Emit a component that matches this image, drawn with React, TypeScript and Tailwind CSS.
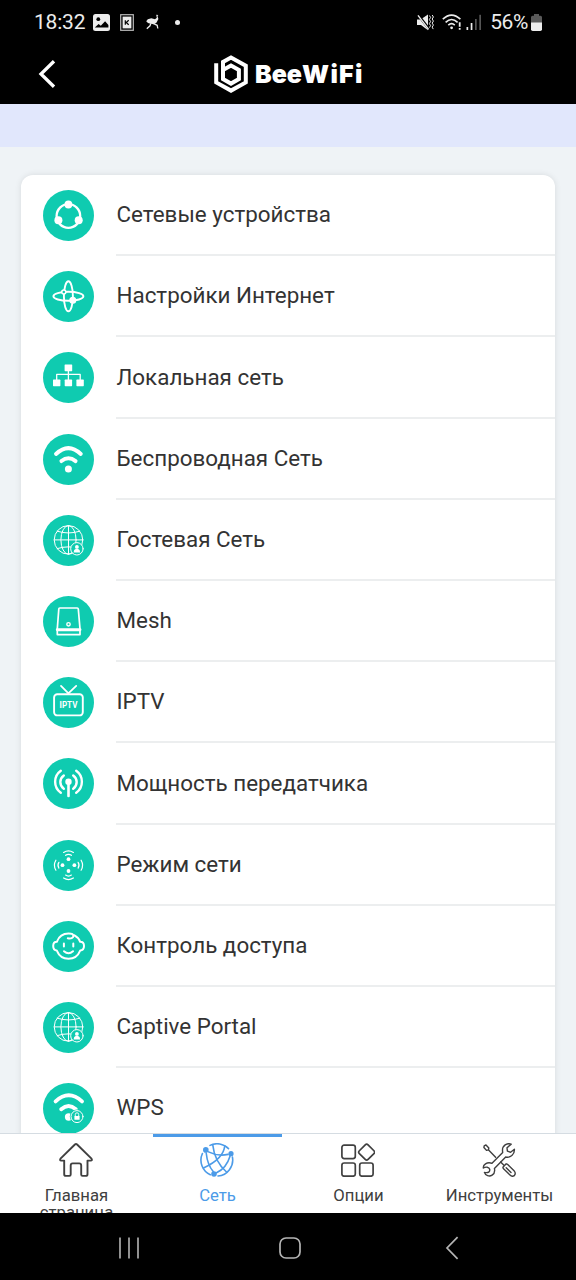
import type { ReactNode } from 'react';

const TEAL = '#0fcbb0';

/* ---------- menu icons, all on a 51x51 grid ---------- */

function Disc({ children }: { children: ReactNode }) {
  return (
    <svg
      viewBox="0 0 51 51"
      className="h-[51px] w-[51px] shrink-0"
      fill="none"
      stroke="white"
      strokeLinecap="round"
      strokeLinejoin="round"
      aria-hidden
    >
      <circle cx="25.5" cy="25.5" r="25.5" fill={TEAL} stroke="none" />
      {children}
    </svg>
  );
}

function DevicesIcon() {
  return (
    <Disc>
      <circle cx="25.4" cy="26" r="11.8" strokeWidth="2.3" />
      <g fill="white" stroke="none">
        <circle cx="25.4" cy="14.5" r="3.9" />
        <circle cx="15.4" cy="30.2" r="4" />
        <circle cx="35.7" cy="30.2" r="4" />
      </g>
    </Disc>
  );
}

function InternetIcon() {
  return (
    <Disc>
      <ellipse cx="25.4" cy="25.3" rx="15" ry="4.5" strokeWidth="1.9" />
      <ellipse cx="25.4" cy="25.3" rx="4.5" ry="15" strokeWidth="1.9" />
      <circle cx="20.8" cy="21" r="2" strokeWidth="1.5" fill={TEAL} />
      <circle cx="29.8" cy="29.3" r="3.5" fill="white" stroke="none" />
    </Disc>
  );
}

function LanIcon() {
  return (
    <Disc>
      <path d="M25.4 18v10M13.7 28v-5.6h23.5V28" strokeWidth="1.3" />
      <g fill="white" stroke="none">
        <rect x="21.6" y="12.4" width="7.6" height="6.8" rx="0.6" />
        <rect x="10" y="27.6" width="7.4" height="6.6" rx="0.6" />
        <rect x="21.7" y="27.6" width="7.4" height="6.6" rx="0.6" />
        <rect x="33.4" y="27.6" width="7.4" height="6.6" rx="0.6" />
      </g>
    </Disc>
  );
}

function WirelessIcon() {
  return (
    <Disc>
      <path d="M13 20Q25.4 8.2 37.8 20" strokeWidth="3.9" />
      <path d="M18.4 27.1Q25.4 21.4 32.6 27.1" strokeWidth="3.9" />
      <circle cx="25.4" cy="34.9" r="3.5" fill="white" stroke="none" />
    </Disc>
  );
}

function GlobeUserIcon() {
  return (
    <Disc>
      <g strokeWidth="1">
        <circle cx="25.5" cy="24.9" r="14.3" />
        <ellipse cx="25.5" cy="24.9" rx="7.6" ry="14.3" />
        <path d="M25.5 10.6v28.6M11.2 24.9h28.6M14.2 16.2q11.3 3.6 22.6 0M14.2 33.6q11.3-3.6 22.6 0" />
      </g>
      <circle cx="33.9" cy="33.8" r="6.2" fill={TEAL} strokeWidth="1" />
      <g fill="white" stroke="none">
        <circle cx="33.9" cy="31.9" r="1.9" />
        <path d="M30.6 37.4q0-3 2.4-3.7h1.8q2.4.7 2.4 3.7z" />
      </g>
    </Disc>
  );
}

function MeshIcon() {
  return (
    <Disc>
      <path d="M16.8 12h17.4q1 0 1.1 1L37 32.6v6H14.3v-6L15.8 13q0-1 1-1z" strokeWidth="1.7" />
      <path d="M14.3 33.7h22.7" strokeWidth="2.9" />
      <circle cx="25.5" cy="28.3" r="1.7" strokeWidth="1.4" />
    </Disc>
  );
}

function IptvIcon() {
  return (
    <Disc>
      <rect x="11.1" y="17.2" width="28.7" height="21.2" rx="3.2" strokeWidth="1.9" />
      <path d="M18 8.9l7.4 7.4 7.8-7.4" strokeWidth="1.8" />
      <text
        x="25.5"
        y="30.5"
        textAnchor="middle"
        fontSize="8.4"
        textLength="17.8"
        lengthAdjust="spacingAndGlyphs"
        fill="white"
        stroke="none"
        className="font-['Roboto',sans-serif] font-bold"
      >
        IPTV
      </text>
    </Disc>
  );
}

function PowerIcon() {
  return (
    <Disc>
      <circle cx="25.5" cy="23.8" r="3.2" fill="white" stroke="none" />
      <path d="M25.5 24v14" strokeWidth="2.6" />
      <g strokeWidth="2.4">
        <path d="M20.8 17.4a8.2 8.2 0 0 0 0 13.4M30.2 17.4a8.2 8.2 0 0 1 0 13.4" />
        <path d="M17.8 12.8a13.5 13.5 0 0 0 0 22M33.2 12.8a13.5 13.5 0 0 1 0 22" />
      </g>
    </Disc>
  );
}

function ModeIcon() {
  return (
    <Disc>
      <g fill="white" stroke="none">
        <circle cx="25.5" cy="19.2" r="1.9" />
        <circle cx="25.5" cy="31" r="1.9" />
        <circle cx="19.5" cy="25.2" r="1.9" />
        <circle cx="31.4" cy="25.2" r="1.9" />
      </g>
      <g strokeWidth="1.2">
        <path d="M22.6 15.3q2.9-1.9 5.8 0M20.6 12.4q4.9-3.2 9.8 0" />
        <path d="M22.6 35.1q2.9 1.9 5.8 0M20.6 38q4.9 3.2 9.8 0" />
        <path d="M15.9 22.3q-1.9 2.9 0 5.8M12.9 20.2q-3 5 0 10" />
        <path d="M35.1 22.3q1.9 2.9 0 5.8M38.1 20.2q3 5 0 10" />
      </g>
    </Disc>
  );
}

function ChildIcon() {
  return (
    <Disc>
      <path
        d="M24.8 17.3c3 .9 5.6-.4 5.6-2.3 0-1.6-2.3-2.4-4.9-2.4-5.6 0-9.8 3.4-11.7 8.2-2.1 0-3.600 1.700-3.600 4.300s1.300 4.400 3.600 4.500c2 4.800 6.300 8.200 11.700 8.200s9.700-3.400 11.700-8.200c2.300-.1 3.800-1.900 3.800-4.500s-1.600-4.300-3.800-4.300c-1-2.600-3-4.900-6.100-6.600"
        strokeWidth="2"
      />
      <path d="M20.9 22.400v3M30.3 22.400v3" strokeWidth="2" />
      <path d="M21 30.200q4.500 4 9 0" strokeWidth="2" />
    </Disc>
  );
}

function WpsIcon() {
  return (
    <Disc>
      <path d="M12.6 18.4Q25.7 6.2 39 18.4" strokeWidth="3.9" />
      <path d="M18.2 26.2Q25.6 20 32.8 26.2" strokeWidth="3.9" />
      <circle cx="25.6" cy="34" r="3.7" fill="white" stroke="none" />
      <circle cx="34" cy="33.6" r="7.2" fill={TEAL} stroke="none" />
      <circle cx="34" cy="33.6" r="6" strokeWidth="1" />
      <path d="M32.3 33v-1.500a1.700 1.700 0 0 1 3.400 0V33" strokeWidth="0.9" />
      <rect x="31.4" y="32.9" width="5.2" height="3.9" rx="0.5" fill="white" stroke="none" />
    </Disc>
  );
}

interface MenuItem {
  label: string;
  icon: ReactNode;
}

const MENU: MenuItem[] = [
  { label: 'Сетевые устройства', icon: <DevicesIcon /> },
  { label: 'Настройки Интернет', icon: <InternetIcon /> },
  { label: 'Локальная сеть', icon: <LanIcon /> },
  { label: 'Беспроводная Сеть', icon: <WirelessIcon /> },
  { label: 'Гостевая Сеть', icon: <GlobeUserIcon /> },
  { label: 'Mesh', icon: <MeshIcon /> },
  { label: 'IPTV', icon: <IptvIcon /> },
  { label: 'Мощность передатчика', icon: <PowerIcon /> },
  { label: 'Режим сети', icon: <ModeIcon /> },
  { label: 'Контроль доступа', icon: <ChildIcon /> },
  { label: 'Captive Portal', icon: <GlobeUserIcon /> },
  { label: 'WPS', icon: <WpsIcon /> },
];

/* ---------- tab icons ---------- */

function TabSvg({ children }: { children: ReactNode }) {
  return (
    <svg
      viewBox="0 0 34 34"
      className="h-[34px] w-[34px]"
      fill="none"
      stroke="currentColor"
      strokeLinecap="round"
      strokeLinejoin="round"
      aria-hidden
    >
      {children}
    </svg>
  );
}

function HomeIcon() {
  return (
    <TabSvg>
      <path
        d="M15.9 1.5 1.5 15.6q-1.1 2 .8 2h2.9v13.6q0 1.7 1.7 1.7h3.5q1.3 0 1.3-1.3v-9.2q0-2 2-2h6.5q2 0 2 2v9.2q0 1.3 1.3 1.3h3.3q1.7 0 1.7-1.7V17.6h3.2q1.9 0 .8-2L18.1 1.5q-1.1-1-2.2 0z"
        strokeWidth="1.9"
      />
    </TabSvg>
  );
}

function NetworkIcon() {
  return (
    <TabSvg>
      <g strokeWidth="1.6">
        <path d="M10 2.4A16 16 0 0 1 28.5 5.6M32.4 14A16 16 0 0 1 18 33M10.3 31.7A16 16 0 0 1 2.4 10.5" />
        <path d="M8.5 8.9q9.5 4.8 19.5 2.5" />
        <path d="M6.2 10Q7.5 22 13.2 28.5" />
        <path d="M12.8 2.2Q14.5 18.5 26.5 29" />
        <path d="M24.8 2.7Q23.5 16 3.5 25" />
        <path d="M30 13.2Q26.5 25 16.5 29.8" />
      </g>
      <g fill="currentColor" stroke="none">
        <circle cx="5.8" cy="6.9" r="2.8" />
        <circle cx="31" cy="10.7" r="2.6" />
        <circle cx="14" cy="31" r="2.8" />
      </g>
    </TabSvg>
  );
}

function OptionsIcon() {
  return (
    <TabSvg>
      <g strokeWidth="1.7">
        <rect x="0.9" y="2.2" width="13.4" height="13.4" rx="2.3" />
        <rect x="0.9" y="20" width="13.4" height="13.2" rx="2.3" />
        <rect x="18.7" y="20" width="13.4" height="13.2" rx="2.3" />
        <rect x="19.5" y="3" width="12.3" height="12.3" rx="2" transform="rotate(45 25.65 9.15)" />
      </g>
    </TabSvg>
  );
}

function ToolsIcon() {
  return (
    <TabSvg>
      <g strokeWidth="1.4">
        <path d="M2.2 2.9 4 1.9l2.8 3-.3 2-2 .5-2.6-2.9zM6.6 7l7 7.2M18.6 19l3.6 3.6M20.9 24.2l3.3-3.4 1.5.6 6.6 6.7c1.6 1.8 1 4.9-1.5 5.2-1.2.1-2-.4-2.8-1.2l-6.7-6.6zM24.2 24.8l4.8 4.8" />
        <path d="M29.2 1.2c-4.3-1.7-9 1.3-8.7 6.5l.2 1.9L10 20.3c-5.2-1.7-9.2 1.5-8.6 4.7 2.5-1.5 5.7-1 6.3 1.3.5 2.4-1.3 3.9-5.3 3.1 1 3.3 5 4.6 7.7 2.8 2.3-1.5 3-3.8 2.3-6.8L23.7 14c4.6 1 9-2.4 8.7-7.7l-3.8 3-3.2-1.2-.4-3.3z" />
      </g>
    </TabSvg>
  );
}

const TABS = [
  { label: 'Главная страница', icon: <HomeIcon /> },
  { label: 'Сеть', icon: <NetworkIcon />, active: true },
  { label: 'Опции', icon: <OptionsIcon /> },
  { label: 'Инструменты', icon: <ToolsIcon /> },
];

/* ---------- page sections ---------- */

function StatusBar() {
  return (
    <div className="flex h-11 items-center pr-[34px] pl-[34px] text-[#ececec]">
      <span className="pt-px text-[21px] tracking-[-0.2px]">18:32</span>
      <svg viewBox="0 0 17 17" className="ml-2 h-[17px] w-[17px]" aria-hidden>
        <rect width="17" height="17" rx="2.5" fill="currentColor" />
        <circle cx="5.3" cy="5.2" r="1.9" fill="black" />
        <path d="M1.8 13.6 5.6 10l2.2 1.8 4.3-4.6 3.3 3.9v2.5z" fill="black" />
      </svg>
      <svg viewBox="0 0 14 17" className="ml-[10px] h-[17px] w-[14px]" aria-hidden>
        <rect x="0.7" y="0.7" width="12.6" height="15.6" fill="none" stroke="#bbb" strokeWidth="1.2" />
        <rect x="2.6" y="2.6" width="8.8" height="11.8" fill="currentColor" />
        <path d="M5.3 6.2v4.6M8.7 6.2 6.2 8.5l2.5 2.3" fill="none" stroke="black" strokeWidth="1.2" />
      </svg>
      <svg viewBox="0 0 14 16" className="ml-3 h-4 w-[14px]" aria-hidden>
        <path
          d="M10.2.8 12.4 1l-.9 1 .9 3-2 3.7-2.5 1.500-3.400-.4-2.500-.8L.2 7.200l1.600-1.900 3.500-1 3.700.9 1.800-1.400z"
          fill="currentColor"
        />
        <path d="M4.8 9.5 4 11.8.8 14.8M7.3 9.5l3.9 1.8.6 3.2" fill="none" stroke="currentColor" strokeWidth="1.3" />
      </svg>
      <span className="ml-[15px] h-[5px] w-[5px] rounded-full bg-current" />

      <div className="ml-auto flex items-center">
        <svg viewBox="0 0 17 17" className="h-[17px] w-[17px]" aria-hidden>
          <path d="M0 5.6h3.6L11 .5v15.7l-7-5.1H0z" fill="currentColor" />
          <path d="M1 .6 12.8 16" stroke="black" strokeWidth="2.6" />
          <path d="M1 1.3 11.6 15.4" stroke="currentColor" strokeWidth="1.4" />
          <path
            d="M12.4 1.5l1.2 2-1.2 2 1.2 2.1-1.2 2 1.2 2-1.2 2M15.2 1l1.2 2-1.2 2 1.2 2.1-1.2 2 1.2 2-1.2 2 1 2"
            fill="none"
            stroke="currentColor"
            strokeWidth="1"
          />
        </svg>
        <svg viewBox="0 0 20 16" className="ml-2 h-4 w-5" fill="none" stroke="currentColor" aria-hidden>
          <path d="M.8 5.2q8.7-8.2 17.6 0M3.6 8.3q6-5.6 12 0M6.3 11.2q3.3-3 6.5 0" strokeWidth="1.6" />
          <circle cx="9.6" cy="13.8" r="1.4" fill="currentColor" stroke="none" />
          <path d="M17.7 8.3v4.5M17.7 14v1.7" strokeWidth="1.8" />
        </svg>
        <svg viewBox="0 0 16 16" className="ml-1 h-4 w-4" aria-hidden>
          <rect x="0.5" y="13" width="1.7" height="3" fill="currentColor" />
          <rect x="4.7" y="9" width="1.7" height="7" fill="currentColor" />
          <rect x="9" y="5" width="1.7" height="11" fill="#555" />
          <rect x="13.3" y="0.8" width="1.7" height="15.2" fill="#555" />
        </svg>
        <span className="ml-2 pt-px text-[21px] tracking-[-0.4px]">56%</span>
        <svg viewBox="0 0 11 17" className="ml-[3px] h-[17px] w-[11px]" aria-hidden>
          <path d="M3 0h5v1.7h1.5q1.5 0 1.5 1.5V9H0V3.2q0-1.5 1.5-1.5H3z" fill="#5a5a5a" />
          <path d="M0 8.5h11v6.8q0 1.7-1.7 1.7H1.7Q0 17 0 15.3z" fill="currentColor" />
        </svg>
      </div>
    </div>
  );
}

function AppHeader() {
  return (
    <header className="grid h-[60px] grid-cols-[1fr_auto_1fr] items-center">
      <button type="button" aria-label="Назад" className="ml-[38px] w-fit text-white">
        <svg viewBox="0 0 18 28" className="h-7 w-[18px]" aria-hidden>
          <path d="M16 1.2 3 14l13 12.8" fill="none" stroke="currentColor" strokeWidth="3.3" />
        </svg>
      </button>
      <div className="flex items-center text-white">
        <svg viewBox="0 0 34 38" className="-mt-px h-[38px] w-[34px]" fill="none" stroke="currentColor" aria-hidden>
          <path
            d="M2.2 8.3v19.1L17 35.6l14.800-8.200V10.800L17 2.600 9 7v17l8 4.600 7.900-4.600v-9L17 10.600l-8 4.500"
            strokeWidth="4"
          />
        </svg>
        <span className="ml-[7px] flex w-[107px] font-['Inter',sans-serif] text-[25px] leading-none font-black whitespace-nowrap">
          Bee<span className="tracking-[1.3px]">WiFi</span>
        </span>
      </div>
    </header>
  );
}

function MenuRow({ label, icon }: MenuItem) {
  return (
    <li className="flex h-[81.2px] shrink-0 items-center gap-[22px] pl-[22px]">
      {icon}
      <span className="flex h-full flex-1 items-center border-b-2 border-[#eceeef] pt-px pl-[0.5px] text-[22.4px] text-[#333]">
        {label}
      </span>
    </li>
  );
}

function TabBar() {
  return (
    <nav className="flex h-20 shrink-0 overflow-hidden border-t border-[#d5dce2] bg-white px-[6px]">
      {TABS.map((tab) => (
        <button
          key={tab.label}
          type="button"
          className={`flex flex-1 flex-col items-center ${tab.active ? 'text-[#4c9be8]' : 'text-[#404040]'}`}
        >
          <span className={`h-[3px] w-[129px] shrink-0 ${tab.active ? 'bg-[#4c9be8]' : ''}`} />
          <span className="mt-[6px] mr-[2px] shrink-0">{tab.icon}</span>
          <span className="mt-[10px] max-w-[112px] text-[16.7px] leading-[17px]">{tab.label}</span>
        </button>
      ))}
    </nav>
  );
}

function SystemBar() {
  return (
    <div className="flex h-[67px] shrink-0 items-center bg-black pt-[2px] text-[#b5b5b5]">
      <svg viewBox="0 0 22 22" className="ml-[118px] h-[22px] w-[22px]" stroke="currentColor" strokeWidth="1.6" aria-hidden>
        <path d="M2 .5v21M11 .5v21M20 .5v21" />
      </svg>
      <svg viewBox="0 0 22 22" className="ml-[139px] h-[22px] w-[22px]" fill="none" stroke="currentColor" strokeWidth="1.7" aria-hidden>
        <rect x="1" y="1" width="20" height="20" rx="6" />
      </svg>
      <svg viewBox="0 0 14 24" className="ml-[144px] h-6 w-[14px]" fill="none" stroke="currentColor" strokeWidth="1.7" aria-hidden>
        <path d="M12.6 1.2 2 12l10.6 10.8" />
      </svg>
    </div>
  );
}

export default function App() {
  return (
    <div className="flex h-[1280px] w-[576px] flex-col overflow-hidden bg-[#eff3f6] font-['Roboto',sans-serif]">
      <div className="shrink-0 bg-black">
        <StatusBar />
        <AppHeader />
      </div>
      <div className="h-[43px] shrink-0 bg-[#e1e7fc]" />
      <main className="min-h-0 flex-1 overflow-hidden px-[21px] pt-7">
        <ul className="flex flex-col rounded-xl bg-white shadow-[0_0_6px_rgba(0,0,0,0.1)]">
          {MENU.map((item) => (
            <MenuRow key={item.label} label={item.label} icon={item.icon} />
          ))}
        </ul>
      </main>
      <TabBar />
      <SystemBar />
    </div>
  );
}
